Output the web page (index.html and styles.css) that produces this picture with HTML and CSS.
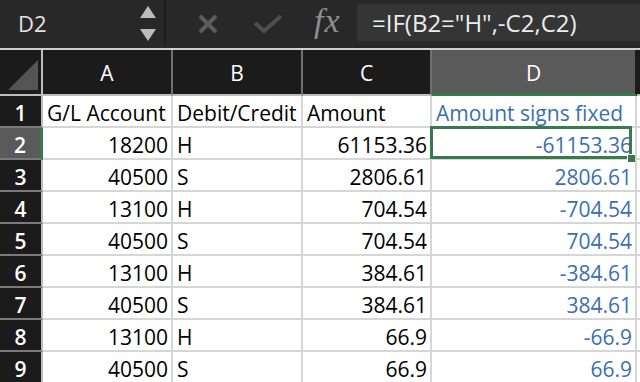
FILE: index.html
```html
<!DOCTYPE html>
<html lang="en">
  <head>
    <meta charset="UTF-8" />
    <title>Amount signs</title>
    <link rel="stylesheet" href="styles.css">
  </head>
  <body>
    <div class="toolbar">
      <div class="namebox">
        <span class="ref">D2</span>
        <div class="spin">
          <svg width="16" height="13" viewBox="0 0 16 13"><polygon points="8,0 16,12 0,12" fill="#bcbcbc"/></svg>
          <svg width="16" height="13" viewBox="0 0 16 13"><polygon points="0,0 16,0 8,12" fill="#bcbcbc"/></svg>
        </div>
      </div>
      <div class="actions">
        <svg class="cancel" width="22" height="20" viewBox="0 0 22 20">
          <path d="M3 2 L19 18 M19 2 L3 18" stroke="#5c5c5c" stroke-width="4" fill="none"/>
        </svg>
        <svg class="enter" width="30" height="20" viewBox="0 0 30 20">
          <path d="M2 9 L11 17 L28 2" stroke="#4e4e4e" stroke-width="4" fill="none"/>
        </svg>
        <span class="fx">fx</span>
      </div>
      <div class="formula">=IF(B2="H",-C2,C2)</div>
    </div>
    <div class="topline"></div>

    <div class="sheet">
      <div class="hd corner">
        <svg width="30" height="30" viewBox="0 0 30 30"><polygon points="30,0 30,30 0,30" fill="#555"/></svg>
      </div>
      <div class="hd col">A</div>
      <div class="hd col">B</div>
      <div class="hd col">C</div>
      <div class="hd col active-col">D</div>
      <div class="hd col"></div>

      <div class="hd rownum">1</div>
      <div class="cell">G/L Account</div>
      <div class="cell">Debit/Credit</div>
      <div class="cell">Amount</div>
      <div class="cell blue">Amount signs fixed</div>
      <div class="cell"></div>

      <div class="hd rownum active-row">2</div>
      <div class="cell num">18200</div>
      <div class="cell">H</div>
      <div class="cell num">61153.36</div>
      <div class="cell num blue selected">-61153.36<span class="sel"><span class="handle"></span></span></div>
      <div class="cell"></div>

      <div class="hd rownum">3</div>
      <div class="cell num">40500</div>
      <div class="cell">S</div>
      <div class="cell num">2806.61</div>
      <div class="cell num blue">2806.61</div>
      <div class="cell"></div>

      <div class="hd rownum">4</div>
      <div class="cell num">13100</div>
      <div class="cell">H</div>
      <div class="cell num">704.54</div>
      <div class="cell num blue">-704.54</div>
      <div class="cell"></div>

      <div class="hd rownum">5</div>
      <div class="cell num">40500</div>
      <div class="cell">S</div>
      <div class="cell num">704.54</div>
      <div class="cell num blue">704.54</div>
      <div class="cell"></div>

      <div class="hd rownum">6</div>
      <div class="cell num">13100</div>
      <div class="cell">H</div>
      <div class="cell num">384.61</div>
      <div class="cell num blue">-384.61</div>
      <div class="cell"></div>

      <div class="hd rownum">7</div>
      <div class="cell num">40500</div>
      <div class="cell">S</div>
      <div class="cell num">384.61</div>
      <div class="cell num blue">384.61</div>
      <div class="cell"></div>

      <div class="hd rownum">8</div>
      <div class="cell num">13100</div>
      <div class="cell">H</div>
      <div class="cell num">66.9</div>
      <div class="cell num blue">-66.9</div>
      <div class="cell"></div>

      <div class="hd rownum">9</div>
      <div class="cell num">40500</div>
      <div class="cell">S</div>
      <div class="cell num">66.9</div>
      <div class="cell num blue">66.9</div>
      <div class="cell"></div>
    </div>
  </body>
</html>
```

FILE: styles.css
```css
body {
  margin: 0;
  width: 640px;
  height: 382px;
  overflow: hidden;
  background-color: #fff;
  font-family: "Open Sans", Lato, sans-serif;
}

.toolbar {
  height: 48px;
  background-color: #282828;
  display: flex;
  align-items: center;
}

.namebox {
  width: 166px;
  height: 46px;
  box-sizing: border-box;
  border-right: 2px solid #1c1c1c;
  display: flex;
  align-items: center;
  justify-content: space-between;
  padding: 0 8px 0 18px;
  margin-top: -2px;
}

.ref {
  color: #e2e2e2;
  font-size: 22px;
}

.spin {
  display: flex;
  flex-direction: column;
  gap: 10px;
  margin-top: 2px;
}

.spin svg {
  display: block;
}

.actions {
  display: flex;
  align-items: center;
  padding-left: 31px;
  width: 191px;
  box-sizing: border-box;
}

.cancel {
  margin-right: 34px;
}

.enter {
  margin-right: 31px;
}

.fx {
  font-family: "Liberation Serif", serif;
  font-style: italic;
  font-size: 34px;
  color: #8e8e8e;
  margin-top: -6px;
  letter-spacing: 1px;
}

.formula {
  flex: 1;
  height: 37px;
  margin-top: -4px;
  background-color: #353535;
  border-radius: 3px 0 0 3px;
  color: #ececec;
  font-size: 24px;
  line-height: 37px;
  padding-left: 15px;
}

.topline {
  height: 2px;
  background-color: #cfcfcf;
}

.sheet {
  display: grid;
  grid-template-columns: 43px 130px 130px 129px 205px 1fr;
  grid-template-rows: 46px repeat(9, 32px);
  background-color: #fff;
}

.hd {
  background-color: #1b1b1b;
  color: #fff;
  font-size: 21px;
  box-sizing: border-box;
  display: flex;
  align-items: center;
  justify-content: center;
}

.col {
  border-right: 2px solid #707070;
  border-bottom: 2px solid #bdbdbd;
  padding-top: 2px;
}

.corner {
  border-right: 2px solid #bdbdbd;
  border-bottom: 2px solid #bdbdbd;
  align-items: flex-end;
  justify-content: flex-start;
  padding: 0 0 4px 8px;
}

.corner svg {
  display: block;
}

.active-col {
  background-color: #5a5a5a;
  border-bottom: 3px solid #377a4c;
  border-right-color: #1b1b1b;
}

.rownum {
  border-right: 2px solid #bdbdbd;
  border-bottom: 2px solid #7a7a7a;
  font-weight: 600;
  padding-top: 4px;
}

.active-row {
  background-color: #5a5a5a;
  border-right: 3px solid #377a4c;
}

.cell {
  box-sizing: border-box;
  border-right: 2px solid #d6d6d6;
  border-bottom: 2px solid #d6d6d6;
  color: #000;
  font-size: 21px;
  padding: 4px 3px 0 4px;
  display: flex;
  align-items: flex-start;
  line-height: 26px;
  white-space: nowrap;
}

.num {
  justify-content: flex-end;
}

.blue {
  color: #3b6fb1;
}

.selected {
  position: relative;
}

.sel {
  position: absolute;
  left: -2px;
  top: -2px;
  right: 3px;
  bottom: -1px;
  border: 3px solid #377a4c;
}

.handle {
  position: absolute;
  right: -6px;
  bottom: -6px;
  width: 7px;
  height: 7px;
  background-color: #377a4c;
  border-left: 1px solid #fff;
  border-top: 1px solid #fff;
}
```
